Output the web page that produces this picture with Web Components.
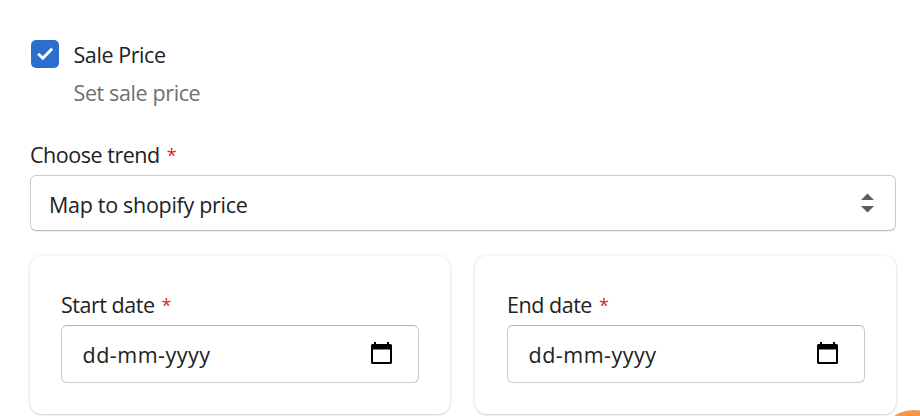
<!DOCTYPE html>
<html lang="en">
<head>
    <meta charset="UTF-8">
    <meta name="viewport" content="width=device-width, initial-scale=1.0">
    <title>Sale Price</title>
    <style>
        body {
            margin: 0;
            height: 416px;
            overflow: hidden;
            background: #fff;
            color: #202223;
            font: 21.5px/30px "Segoe UI", "Open Sans", "Noto Sans", sans-serif;
        }
    </style>
</head>
<body>

<template id="price-check-template">
    <style>
        :host {
            display: flex;
            gap: 14.5px;
            padding-left: 1px;
        }

        .box {
            width: 28px;
            height: 28px;
            border-radius: 5px;
            background: #2c6ecb;
        }

        svg {
            display: block;
        }

        .label {
            display: block;
            letter-spacing: -.42px;
        }

        .help {
            display: block;
            margin-top: 8px;
            color: #6d7175;
            letter-spacing: -.38px;
        }
    </style>
    <span class="box">
        <svg width="28" height="28" viewBox="0 0 28 28">
            <path d="M7.200 13.800l4.600 4.500 9.300-9.500" fill="none" stroke="#fff" stroke-width="2.900"/>
        </svg>
    </span>
    <span>
        <slot class="label"></slot>
        <slot class="help" name="help"></slot>
    </span>
</template>

<template id="field-label-template">
    <style>
        :host {
            display: flex;
            gap: 7px;
            height: 30px;
            white-space: nowrap;
        }

        .text {
            display: block;
            letter-spacing: -.47px;
        }

        .star {
            color: #d72c0d;
            font-size: 18px;
        }
    </style>
    <slot class="text"></slot>
    <span class="star">*</span>
</template>

<template id="trend-select-template">
    <style>
        :host {
            display: flex;
            align-items: center;
            justify-content: space-between;
            box-sizing: border-box;
            height: 56px;
            padding: 3px 21px 0 18px;
            border: 1px solid #c9cccf;
            border-bottom-color: #babfc3;
            border-radius: 6px;
            box-shadow: 0 1px 0 rgba(0, 0, 0, .05);
        }

        .value {
            display: block;
            letter-spacing: -.3px;
        }

        svg {
            display: block;
            margin-top: -3px;
        }
    </style>
    <slot class="value"></slot>
    <svg width="13" height="20" viewBox="0 0 13 20">
        <path d="M0 7L6.5 .5 13 7zM0 13h13l-6.500 6.500z" fill="#5c5f62"/>
    </svg>
</template>

<template id="date-card-template">
    <style>
        :host {
            display: block;
            box-sizing: border-box;
            height: 158px;
            padding: 34px 31px 0;
            border-radius: 12px;
            background: #fff;
            box-shadow: 0 0 4px rgba(23, 24, 24, .09), 0 1px 2px rgba(0, 0, 0, .15);
        }

        .input {
            display: flex;
            align-items: center;
            justify-content: space-between;
            box-sizing: border-box;
            height: 58px;
            margin-top: 5px;
            padding: 1px 26px 0 20.500px;
            border: 1px solid #c9cccf;
            border-top-color: #aeb4b9;
            border-radius: 6px;
        }

        .value {
            letter-spacing: .5px;
        }

        svg {
            display: block;
            margin-top: -3px;
        }
    </style>
    <field-label><slot></slot></field-label>
    <div class="input">
        <span class="value">dd-mm-yyyy</span>
        <svg width="21" height="22" viewBox="0 0 21 22">
            <path d="M3 0h2v2h11V0h2v2h1.500q1.500 0 1.500 1.500v17q0 1.500-1.500 1.500h-18Q0 22 0 20.500v-17Q0 2 1.500 2H3zM2 7.500V20h17V7.500z" fill="#000"/>
        </svg>
    </div>
</template>

<template id="sale-form-template">
    <style>
        :host {
            display: flex;
            flex-direction: column;
            box-sizing: border-box;
            width: 896px;
            padding: 40px 0 0 30px;
        }

        .trend-label {
            margin-top: 32px;
        }

        .trend {
            margin-top: 5px;
        }

        .dates {
            display: grid;
            grid-template-columns: 420px 421px;
            gap: 25px;
            margin-top: 25px;
        }

        .end {
            padding-left: 32px;
        }
    </style>
    <price-check>Sale Price<span slot="help">Set sale price</span></price-check>
    <field-label class="trend-label">Choose trend</field-label>
    <trend-select class="trend">Map to shopify price</trend-select>
    <div class="dates">
        <date-card>Start date</date-card>
        <date-card class="end">End date</date-card>
    </div>
</template>

<template id="help-bubble-template">
    <style>
        /* floats over the page, mostly below the fold */
        :host {
            position: absolute;
            left: 880px;
            top: 410px;
            width: 40px;
            height: 6px;
            overflow: hidden;
        }

        svg {
            display: block;
        }
    </style>
    <svg width="40" height="6" viewBox="0 0 40 6">
        <circle cx="33.500" cy="34" r="34" fill="#f79646"/>
    </svg>
</template>

<script>
    // Clones the template named after the element into its shadow root
    class TemplateElement extends HTMLElement {
        constructor() {
            super();
            this.attachShadow({mode: 'open'});
            const template = document.getElementById(this.localName + '-template');
            this.shadowRoot.appendChild(template.content.cloneNode(true));
        }
    }

    customElements.define('price-check', class extends TemplateElement {});
    customElements.define('field-label', class extends TemplateElement {});
    customElements.define('trend-select', class extends TemplateElement {});
    customElements.define('date-card', class extends TemplateElement {});
    customElements.define('help-bubble', class extends TemplateElement {});
    customElements.define('sale-form', class extends TemplateElement {});
</script>

<sale-form></sale-form>
<help-bubble></help-bubble>

</body>
</html>
